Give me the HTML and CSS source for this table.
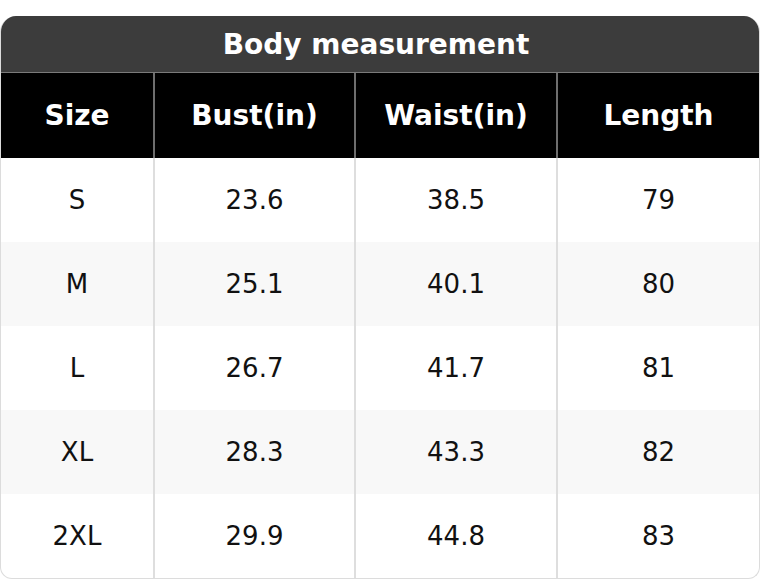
FILE: index.html
```html
<!DOCTYPE html>
<html>
<head>
<meta charset="utf-8">
<link rel="stylesheet" href="styles.css">
</head>
<body>
<div class="card">
  <div class="title">Body measurement</div>
  <div class="grid head">
    <div class="cell">Size</div>
    <div class="cell">Bust(in)</div>
    <div class="cell">Waist(in)</div>
    <div class="cell">Length</div>
  </div>
  <div class="grid row">
    <div class="cell">S</div><div class="cell">23.6</div><div class="cell">38.5</div><div class="cell">79</div>
  </div>
  <div class="grid row alt">
    <div class="cell">M</div><div class="cell">25.1</div><div class="cell">40.1</div><div class="cell">80</div>
  </div>
  <div class="grid row">
    <div class="cell">L</div><div class="cell">26.7</div><div class="cell">41.7</div><div class="cell">81</div>
  </div>
  <div class="grid row alt">
    <div class="cell">XL</div><div class="cell">28.3</div><div class="cell">43.3</div><div class="cell">82</div>
  </div>
  <div class="grid row">
    <div class="cell">2XL</div><div class="cell">29.9</div><div class="cell">44.8</div><div class="cell">83</div>
  </div>
</div>
</body>
</html>
```
FILE: styles.css
```css
html, body {
  margin: 0;
  padding: 0;
  background: #ffffff;
}
body {
  padding-top: 16px;
  font-family: "DejaVu Sans", Verdana, sans-serif;
}
.card {
  width: 760px;
  box-sizing: border-box;
  border-radius: 16px 16px 12px 12px;
  overflow: hidden;
  border: 1px solid #dcdcdc;
  border-top: none;
  background: #fff;
  height: 563px;
}
.title {
  height: 56px;
  background: #3c3c3c;
  color: #fff;
  font-weight: bold;
  font-size: 28px;
  display: flex;
  align-items: center;
  justify-content: center;
  padding-right: 8px;
  border-bottom: 1px solid #7a7a7a;
}
.grid {
  display: grid;
  grid-template-columns: 152px 201px 202px 1fr;
}
.cell {
  display: flex;
  align-items: center;
  justify-content: center;
}
.head {
  height: 85px;
  background: #000;
  color: #fff;
  font-weight: bold;
  font-size: 28px;
}
.head .cell + .cell {
  border-left: 2px solid #6e6e6e;
}
.row {
  height: 84px;
  font-size: 26px;
  color: #111;
}
.row .cell + .cell {
  border-left: 2px solid #dedede;
}
.alt {
  background: #f8f8f8;
}
```
